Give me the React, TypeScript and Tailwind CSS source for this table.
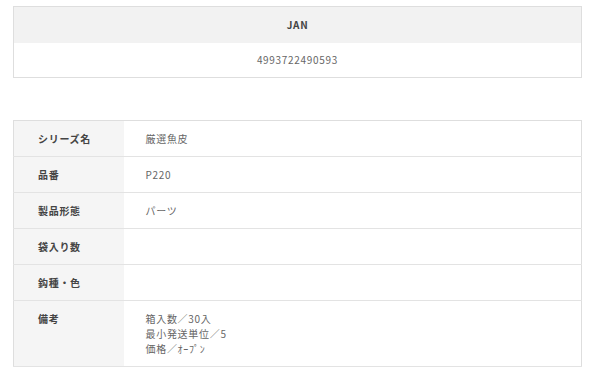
const specRows: { label: string; lines: string[] }[] = [
  { label: "シリーズ名", lines: ["厳選魚皮"] },
  { label: "品番", lines: ["P220"] },
  { label: "製品形態", lines: ["パーツ"] },
  { label: "袋入り数", lines: [] },
  { label: "鈎種・色", lines: [] },
  { label: "備考", lines: ["箱入数／30入", "最小発送単位／5", "価格／ｵｰﾌﾟﾝ"] },
];

const font = { fontFamily: '"Noto Sans CJK JP", "Noto Sans", sans-serif' };

export default function App() {
  return (
    <div className="h-[380px] w-[600px] bg-white pt-[6px] pl-[13px] pr-[18px]" style={font}>
      <table className="w-full border-collapse border border-[#dedede] text-[10px] tracking-[0.07em]">
        <tbody>
          <tr>
            <th className="h-[36px] bg-[#f2f2f2] text-center font-bold text-[#444]">JAN</th>
          </tr>
          <tr>
            <td className="h-[35px] text-center text-[#666]">4993722490593</td>
          </tr>
        </tbody>
      </table>

      <table className="mt-[42px] w-full border-collapse border border-[#dedede] text-[10px] leading-[15px] tracking-[0.07em]">
        <tbody>
          {specRows.map(({ label, lines }) => (
            <tr key={label} className="border-b border-[#e3e3e3]">
              <th
                className={`w-[110px] bg-[#f5f5f5] py-[10px] pl-[24px] text-left font-bold text-[#444] ${
                  lines.length > 1 ? "align-top" : "align-middle"
                }`}
              >
                {label}
              </th>
              <td className="h-[36px] py-[10px] pl-[22px] align-top text-[#666]">
                {lines.map((line) => (
                  <div key={line}>{line}</div>
                ))}
              </td>
            </tr>
          ))}
        </tbody>
      </table>
    </div>
  );
}
